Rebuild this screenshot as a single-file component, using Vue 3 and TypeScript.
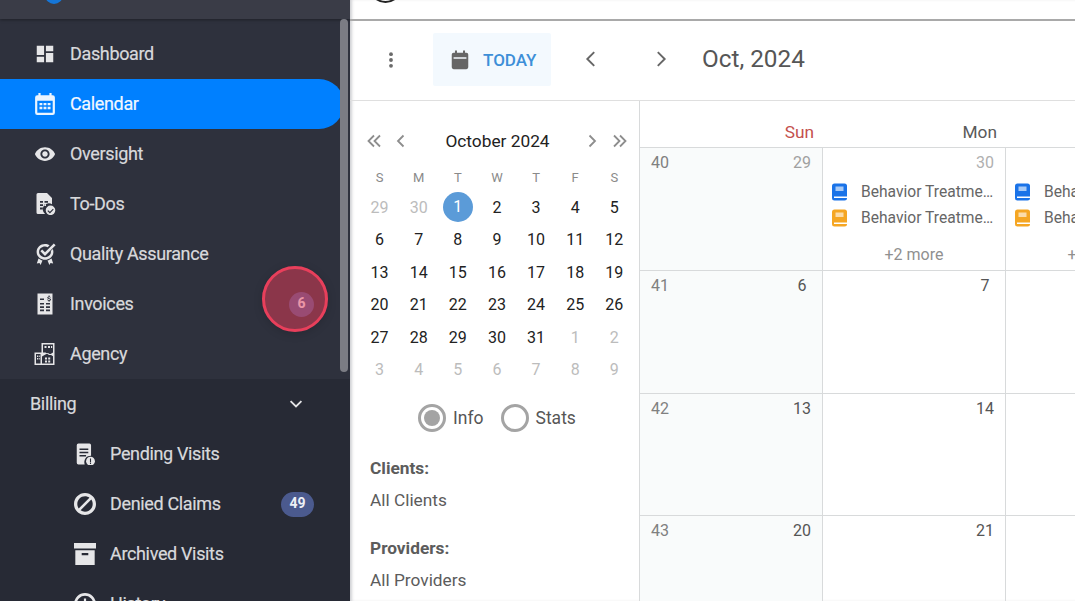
<script setup lang="ts">
const prevDays = [29, 30]
const monthDays = Array.from({ length: 31 }, (_, i) => i + 1)
const nextDays = [1, 2, 3, 4, 5, 6, 7, 8, 9]
interface Cell { label: number; muted: boolean; selected: boolean }
const cells: Cell[] = [
  ...prevDays.map((d) => ({ label: d, muted: true, selected: false })),
  ...monthDays.map((d) => ({ label: d, muted: false, selected: d === 1 })),
  ...nextDays.map((d) => ({ label: d, muted: true, selected: false })),
]
const weekdays = ['S', 'M', 'T', 'W', 'T', 'F', 'S']
const weeks = [
  { no: 41, sun: 6, mon: 7 },
  { no: 42, sun: 13, mon: 14 },
  { no: 43, sun: 20, mon: 21 },
]
</script>

<template>
  <div class="page">
    <aside class="sidebar">
      <div class="brand"><span class="brand-logo"></span></div>
      <nav class="nav">
        <a class="item">
          <svg class="ico" viewBox="0 0 24 24"><path d="M3 13h8V3H3v10zm0 8h8v-6H3v6zm10 0h8V11h-8v10zm0-18v6h8V3h-8z" /></svg>
          <span class="label">Dashboard</span>
        </a>
        <a class="item active">
          <svg class="ico" viewBox="2 1 20 20"><path d="M19 3h-1V1h-2v2H8V1H6v2H5a2 2 0 0 0-2 2v14a2 2 0 0 0 2 2h14a2 2 0 0 0 2-2V5a2 2 0 0 0-2-2zm0 16H5V8h14v11z" /><path d="M7 10h2.600v2.200H7zM10.700 10h2.600v2.200h-2.600zM14.400 10H17v2.200h-2.600zM7 13.500h2.600v2.200H7zM10.700 13.500h2.600v2.200h-2.600zM14.400 13.500H17v2.200h-2.600z" /></svg>
          <span class="label">Calendar</span>
        </a>
        <a class="item">
          <svg class="ico" viewBox="0 0 24 24"><path d="M12 4.500C7 4.500 2.730 7.610 1 12c1.730 4.390 6 7.500 11 7.500s9.270-3.110 11-7.500c-1.730-4.390-6-7.500-11-7.500zM12 17c-2.760 0-5-2.240-5-5s2.240-5 5-5 5 2.240 5 5-2.240 5-5 5zm0-8c-1.660 0-3 1.340-3 3s1.340 3 3 3 3-1.340 3-3-1.340-3-3-3z" /></svg>
          <span class="label">Oversight</span>
        </a>
        <a class="item">
          <svg class="ico" viewBox="1 1 22 22"><path fill-rule="evenodd" d="M5 1h9l5 5v6.200a6 6 0 0 0-6.900 9.800H5a1.500 1.500 0 0 1-1.500-1.500v-18A1.500 1.500 0 0 1 5 1zm2 8v1.800h3V9zm4.500 0v1.800H15V9zM7 12.300v1.800h3v-1.800zm4.500 0v1.800H13v-1.800zM7 15.600v1.800h3v-1.800z" /><path fill-rule="evenodd" d="M17.500 13.500a4.800 4.800 0 1 1 0 9.600 4.800 4.800 0 0 1 0-9.600zm2.400 3.300-3 3-1.700-1.600-.8.800 2.500 2.400 3.800-3.800z" /></svg>
          <span class="label">To-Dos</span>
        </a>
        <a class="item">
          <svg class="ico" viewBox="1 1 22 22"><path d="M12 2c-4.600 0-8.400 3.500-8.400 7.900s3.800 7.900 8.400 7.900 8.400-3.500 8.400-7.900c0-1-.2-2-.6-2.900l-2 2c.1.300.1.600.1.900 0 2.900-2.600 5.300-5.900 5.300S6.100 12.800 6.100 9.900 8.700 4.600 12 4.600c1 0 1.900.2 2.700.6l1.900-1.900C15.300 2.500 13.700 2 12 2z" /><path d="M20.800 1.500 12 10.300 9.200 7.500 7.400 9.300l4.600 4.600L22.600 3.300z" /><path d="m5.500 16.500 3 1.800 1 .1L7.600 23l-1.100-2.100-2.700.7zM18.500 16.500l-3 1.800-1 .1 1.900 4.600 1.100-2.100 2.700.7z" /></svg>
          <span class="label">Quality Assurance</span>
        </a>
        <a class="item">
          <svg class="ico" viewBox="1 1 22 22"><path fill-rule="evenodd" d="M4.500 1.500h15v21h-15zM7 6.500v1.500h4V6.500zM7 11v1.600h4V11zm6 0v1.600h4V11zM7 14.300v1.600h4v-1.600zm6 0v1.600h4v-1.600zM7 17.600v1.600h4v-1.600zm6 0v1.600h4v-1.600z" /><path class="cut" d="M15.600 3.500h1v.9c.7.100 1.200.5 1.300 1.200h-1c-.1-.3-.3-.5-.8-.5s-.8.200-.8.500.3.400 1 .6c.9.200 1.700.5 1.700 1.400 0 .7-.6 1.200-1.400 1.300v.8h-1v-.8c-.8-.1-1.400-.6-1.500-1.300h1c.1.400.4.600.9.600.6 0 .9-.2.900-.5s-.2-.5-1-.7c-.9-.2-1.600-.5-1.600-1.300 0-.7.500-1.100 1.300-1.300z" /></svg>
          <span class="label">Invoices</span>
          <span class="count count-small">6</span>
        </a>
        <a class="item">
          <svg class="ico" viewBox="1 1 22 22"><path fill-rule="evenodd" d="M8.500 1h13v22h-20V10.500h7zM10 2.500v8h2.500l3.500 2.500 4-2.500V2.500zM11.500 4h2v2h-2zm3.500 0h2v2h-2zm3 0h1.200v2H18zM3 12v9.500h4.500V12zm1 1.500h1V15H4zm1.700 0h1V15h-1zM4 16h1v1.500H4zm1.700 0h1v1.500h-1zM9 21.500h11v-7.200l-5-3.400-6 3.700zm3-6h2v2h-2zm3.200 0h2v2h-2zM12 18.500h2v2h-2zm3.200 0h2v2h-2z" /></svg>
          <span class="label">Agency</span>
        </a>
      </nav>
      <section class="billing">
        <div class="group">
          <span class="label">Billing</span>
          <svg class="chev" viewBox="0 0 24 24"><path d="M5.500 8.500 12 15l6.500-6.500" /></svg>
        </div>
        <a class="item sub">
          <svg class="ico" viewBox="3 2 20 20"><path d="M7 2.500h10A1.500 1.500 0 0 1 18.500 4v9.500a6 6 0 0 0-5.800 8H7A1.500 1.500 0 0 1 5.500 20V4A1.500 1.500 0 0 1 7 2.500z" /><path class="cut" d="M8 7h8v1.300H8zM8 10h8v1.300H8zM8 13h6v1.300H8z" /><path d="M18 14.500a4 4 0 1 1 0 8 4 4 0 0 1 0-8z" /><path class="cut" d="M17.500 16h1v3.400h-1zM17.500 20h1v1h-1z" /></svg>
          <span class="label">Pending Visits</span>
        </a>
        <a class="item sub">
          <svg class="ico" viewBox="2 2 20 20"><path d="M12 2C6.480 2 2 6.480 2 12s4.480 10 10 10 10-4.480 10-10S17.520 2 12 2zM5 12c0-3.870 3.130-7 7-7 1.500 0 2.900.48 4 1.290L6.290 16C5.480 14.900 5 13.500 5 12zm7 7c-1.500 0-2.900-.48-4-1.290L17.710 8C18.520 9.100 19 10.500 19 12c0 3.870-3.130 7-7 7z" /></svg>
          <span class="label">Denied Claims</span>
          <span class="count">49</span>
        </a>
        <a class="item sub">
          <svg class="ico" viewBox="2 2 20 20"><path fill-rule="evenodd" d="M2 2h20v5H2zM3.200 8.500h17.600V22H3.200zM9 11v2.200h6V11z" /></svg>
          <span class="label">Archived Visits</span>
        </a>
        <a class="item sub">
          <svg class="ico" viewBox="2 2 20 20"><path d="M12 2a10 10 0 1 0 0 20 10 10 0 0 0 0-20zm0 2.500a7.500 7.500 0 1 1 0 15 7.500 7.500 0 0 1 0-15zM11 7v6l5 3 1-1.600-4-2.400V7z" /></svg>
          <span class="label">History</span>
        </a>
      </section>
      <div class="scrollbar"></div>
      <div class="pulse"></div>
    </aside>

    <main class="main">
      <div class="topbar"><span class="top-logo"></span></div>
      <header class="toolbar">
        <svg class="kebab" viewBox="0 0 24 24"><circle cx="12" cy="5" r="2.300" /><circle cx="12" cy="12" r="2.300" /><circle cx="12" cy="19" r="2.300" /></svg>
        <button class="today">
          <svg class="today-ico" viewBox="0 0 24 24"><path fill-rule="evenodd" d="M19 4h-1.500V1.500h-2.200V4H8.700V1.500H6.500V4H5a2 2 0 0 0-2 2v14a2 2 0 0 0 2 2h14a2 2 0 0 0 2-2V6a2 2 0 0 0-2-2zM5 10.500h14V9H5z" /></svg>
          <span>TODAY</span>
        </button>
        <svg class="nav-chev" viewBox="0 0 24 24"><path d="M15.500 4.500 8 12l7.500 7.500" /></svg>
        <svg class="nav-chev next" viewBox="0 0 24 24"><path d="M8.500 4.500 16 12l-7.500 7.500" /></svg>
        <h1 class="range">Oct, 2024</h1>
      </header>

      <div class="content">
        <section class="panel">
          <div class="month-head">
            <span class="arrow-group">
              <svg class="mini" viewBox="0 0 16 16"><path d="M8 2.500 2.500 8 8 13.500M14 2.500 8.500 8l5.500 5.500" /></svg>
              <svg class="mini second" viewBox="0 0 16 16"><path d="M10.500 2.500 5 8l5.500 5.500" /></svg>
            </span>
            <span class="month-title">October 2024</span>
            <span class="arrow-group">
              <svg class="mini third" viewBox="0 0 16 16"><path d="M5.500 2.500 11 8l-5.500 5.500" /></svg>
              <svg class="mini fourth" viewBox="0 0 16 16"><path d="m2 2.500 5.500 5.500L2 13.500M8 2.500l5.500 5.500L8 13.500" /></svg>
            </span>
          </div>
          <div class="weekdays">
            <span v-for="(w, i) in weekdays" :key="i">{{ w }}</span>
          </div>
          <div class="days">
            <span v-for="(c, i) in cells" :key="i" class="day" :class="{ muted: c.muted }">
              <span :class="{ selected: c.selected }">{{ c.label }}</span>
            </span>
          </div>
          <div class="radios">
            <span class="radio on"></span><span class="radio-label">Info</span>
            <span class="radio"></span><span class="radio-label">Stats</span>
          </div>
          <dl class="filters">
            <dt>Clients:</dt>
            <dd>All Clients</dd>
            <dt>Providers:</dt>
            <dd>All Providers</dd>
          </dl>
        </section>

        <section class="calendar">
          <div class="cal-head">
            <span class="sun">Sun</span>
            <span>Mon</span>
          </div>
          <div class="cal-row">
            <div class="cell sunday">
              <div class="cell-top"><span class="wk">40</span><span class="date soft">29</span></div>
            </div>
            <div class="cell">
              <div class="cell-top end"><span class="date softer">30</span></div>
              <div class="event">
                <svg class="book" viewBox="0 0 18 18"><rect x="1" y="0.500" width="15" height="17" rx="2.500" fill="#1a73e8" /><rect x="4.500" y="3.500" width="8" height="4.500" fill="#a9cbf6" /><rect x="3" y="13.500" width="14" height="1.500" fill="#fff" /></svg>
                <span class="ev-text">Behavior Treatment Plan</span>
              </div>
              <div class="event">
                <svg class="book" viewBox="0 0 18 18"><rect x="1" y="0.500" width="15" height="17" rx="2.500" fill="#f5a623" /><rect x="4.500" y="3.500" width="8" height="4.500" fill="#fbdcaa" /><rect x="3" y="13.500" width="14" height="1.500" fill="#fff" /></svg>
                <span class="ev-text">Behavior Treatment Plan</span>
              </div>
              <div class="more">+2 more</div>
            </div>
            <div class="cell">
              <div class="event first-blank">
                <svg class="book" viewBox="0 0 18 18"><rect x="1" y="0.500" width="15" height="17" rx="2.500" fill="#1a73e8" /><rect x="4.500" y="3.500" width="8" height="4.500" fill="#a9cbf6" /><rect x="3" y="13.500" width="14" height="1.500" fill="#fff" /></svg>
                <span class="ev-text">Behavior Treatment Plan</span>
              </div>
              <div class="event">
                <svg class="book" viewBox="0 0 18 18"><rect x="1" y="0.500" width="15" height="17" rx="2.500" fill="#f5a623" /><rect x="4.500" y="3.500" width="8" height="4.500" fill="#fbdcaa" /><rect x="3" y="13.500" width="14" height="1.500" fill="#fff" /></svg>
                <span class="ev-text">Behavior Treatment Plan</span>
              </div>
              <div class="more">+2 more</div>
            </div>
          </div>
          <div v-for="w in weeks" :key="w.no" class="cal-row">
            <div class="cell sunday">
              <div class="cell-top"><span class="wk">{{ w.no }}</span><span class="date">{{ w.sun }}</span></div>
            </div>
            <div class="cell"><div class="cell-top end"><span class="date">{{ w.mon }}</span></div></div>
            <div class="cell"></div>
          </div>
        </section>
      </div>
    </main>
  </div>
</template>

<style>
html, body { margin: 0; overflow: hidden; background: #fff; }
</style>

<style scoped>
.page {
  display: flex;
  width: 1075px;
  height: 601px;
  overflow: hidden;
  font-family: Roboto, "Liberation Sans", sans-serif;
}
.sidebar {
  position: relative;
  flex: 0 0 350px;
  height: 601px;
  overflow: hidden;
  background: #2e313d;
  color: #d8d9dc;
  font-size: 18px;
}
.brand {
  position: relative;
  height: 19px;
  overflow: hidden;
  background: #3a3c47;
  box-shadow: 0 1px 3px rgba(0, 0, 0, 0.35);
}
.brand-logo {
  position: absolute;
  left: 45px;
  top: -14px;
  width: 18px;
  height: 18px;
  border-radius: 50%;
  background: #1576d8;
}
.nav { padding-top: 10px; }
.item {
  display: flex;
  align-items: center;
  gap: 14px;
  height: 50px;
  width: 344px;
  box-sizing: border-box;
  padding: 0 36px 0 34px;
  letter-spacing: -0.35px;
}
.label {
  margin-bottom: 2px;
  -webkit-text-stroke: 0.2px currentColor;
}
.item.active {
  background: #0080ff;
  color: #f2f8ff;
  border-radius: 0 25px 25px 0;
}
.ico {
  flex: 0 0 22px;
  width: 22px;
  height: 22px;
  fill: #e6e6e8;
}
.active .ico { fill: #eaf4ff; }
.cut { fill: #2e313d; }
.billing {
  background: #272a35;
  height: 300px;
}
.group {
  display: flex;
  align-items: center;
  justify-content: space-between;
  height: 50px;
  width: 344px;
  box-sizing: border-box;
  padding: 0 38px 0 30px;
  letter-spacing: -0.35px;
}
.chev {
  width: 20px;
  height: 20px;
  fill: none;
  stroke: #e4e4e6;
  stroke-width: 2.200;
}
.sub { padding-left: 74px; }
.sub .cut { fill: #272a35; }
.count {
  margin-left: auto;
  min-width: 33px;
  height: 25px;
  border-radius: 13px;
  background: #4b5a8e;
  color: #eef0f6;
  font-size: 14px;
  font-weight: 700;
  letter-spacing: 0;
  line-height: 23px;
  text-align: center;
  margin-right: -6px;
}
.count-small {
  min-width: 25px;
  margin-right: -6px;
}
.scrollbar {
  position: absolute;
  left: 340px;
  top: 19px;
  width: 8px;
  height: 353px;
  border-radius: 4px;
  background: #7b7c84;
}
.pulse {
  position: absolute;
  left: 262px;
  top: 266px;
  width: 66px;
  height: 66px;
  box-sizing: border-box;
  border: 3px solid #e83f5b;
  border-radius: 50%;
  background: rgba(232, 60, 88, 0.5);
  box-shadow: 0 2px 10px rgba(0, 0, 0, 0.15);
}
.main {
  flex: 1;
  min-width: 0;
  height: 601px;
  overflow: hidden;
  background: #fff;
  box-shadow: inset 3px 0 3px -1px rgba(40, 44, 60, 0.22);
}
.topbar {
  position: relative;
  height: 19px;
  overflow: hidden;
  border-bottom: 2px solid #a9a9a9;
}
.top-logo {
  position: absolute;
  left: 19px;
  top: -30px;
  width: 29px;
  height: 29px;
  border: 2px solid #222;
  border-radius: 50%;
  box-sizing: content-box;
}
.toolbar {
  display: flex;
  align-items: center;
  height: 79px;
  border-bottom: 1px solid #dfdfdf;
  padding-left: 31px;
  color: #555;
}
.kebab {
  width: 20px;
  height: 20px;
  fill: #6b6b6b;
  margin-top: -2px;
}
.today {
  display: flex;
  align-items: center;
  gap: 12px;
  width: 118px;
  height: 53px;
  margin: -2px 0 0 32px;
  padding: 0 0 0 16px;
  border: 0;
  border-radius: 2px;
  background: #f3f9fe;
  color: #3d8fd8;
  font: 500 17px Roboto, "Liberation Sans", sans-serif;
}
.today-ico {
  width: 22px;
  height: 22px;
  fill: #666;
}
.nav-chev {
  width: 22px;
  height: 22px;
  fill: none;
  stroke: #666;
  stroke-width: 2.100;
  margin-left: 29px;
  margin-top: -3px;
}
.nav-chev.next { margin-left: 48px; }
.range {
  margin: -5px 0 0 30px;
  font-size: 24.300px;
  font-weight: 400;
  color: #565656;
}
.content {
  display: flex;
  height: 500px;
}
.panel {
  flex: 0 0 290px;
  box-sizing: border-box;
  border-right: 1px solid #d8dadb;
  padding: 24px 0 0 10px;
}
.month-head {
  display: flex;
  align-items: center;
  justify-content: space-between;
  width: 262px;
  height: 32px;
  padding-left: 6px;
}
.arrow-group { display: flex; align-items: center; }
.mini {
  width: 16px;
  height: 16px;
  fill: none;
  stroke: #8d8d8d;
  stroke-width: 1.800;
}
.mini.second { margin-left: 11px; }
.mini.third { margin-right: 12px; }
.month-title {
  font-size: 17.300px;
  color: #222;
  margin-left: 2px;
}
.weekdays, .days {
  display: grid;
  grid-template-columns: repeat(7, 39.140px);
}
.weekdays {
  margin-top: 11px;
  height: 23px;
  line-height: 20px;
  text-align: center;
  font-size: 13px;
  color: #8a8a8a;
}
.days {
  grid-auto-rows: 32.500px;
  text-align: center;
  font-size: 16px;
  color: #222;
}
.day {
  display: flex;
  align-items: center;
  justify-content: center;
}
.day.muted { color: #bcbcbc; }
.selected {
  display: block;
  width: 30px;
  height: 30px;
  border-radius: 50%;
  background: #5b9bd8;
  color: #fff;
  line-height: 30px;
}
.radios {
  display: flex;
  align-items: center;
  height: 28px;
  margin-top: 18px;
  padding-left: 58px;
  font-size: 17.500px;
  color: #565656;
}
.radio {
  position: relative;
  box-sizing: border-box;
  width: 28px;
  height: 28px;
  border: 3px solid #a4a4a4;
  border-radius: 50%;
}
.radio.on::after {
  content: "";
  position: absolute;
  inset: 3px;
  border-radius: 50%;
  background: #a4a4a4;
}
.radio-label { margin: 0 17px 0 7px; }
.filters {
  margin: 0;
  padding: 24px 0 0 10px;
  font-size: 17.300px;
  color: #5c5c5c;
}
.filters dt {
  font-weight: 700;
  font-size: 17.300px;
  line-height: 24px;
}
.filters dd {
  margin: 8px 0 24px;
  line-height: 24px;
}
.calendar {
  flex: 1;
  min-width: 0;
  overflow: hidden;
}
.cal-head {
  display: grid;
  grid-template-columns: 183px 183px;
  height: 47px;
  box-sizing: border-box;
  border-bottom: 1px solid #d8dadb;
  padding-top: 20px;
  font-size: 17.300px;
  line-height: 22px;
  color: #5a5a5a;
  text-align: right;
  width: 435px;
}
.cal-head span { padding-right: 9px; }
.cal-head .sun { color: #c4504d; }
.cal-row {
  display: grid;
  grid-template-columns: 183px 183px 183px;
  height: 122.800px;
}
.cell {
  box-sizing: border-box;
  min-width: 0;
  border-right: 1px solid #d8dadb;
  border-bottom: 1px solid #d8dadb;
  padding: 4px 11px 0;
  font-size: 16px;
  color: #555;
}
.sunday { background: #f9fbfb; }
.cell-top {
  display: flex;
  justify-content: space-between;
  line-height: 22px;
}
.cell-top.end { justify-content: flex-end; }
.date {
  min-width: 18px;
  text-align: center;
}
.wk { color: #808080; }
.soft { color: #a0a0a0; }
.softer { color: #b0b0b0; }
.event {
  display: flex;
  align-items: center;
  gap: 12px;
  height: 26px;
  margin-left: -3px;
  margin-right: -2px;
}
.cell-top + .event { margin-top: 5px; }
.first-blank { margin-top: 27px; }
.book {
  flex: 0 0 18px;
  width: 18px;
  height: 18px;
}
.ev-text {
  flex: 1;
  min-width: 0;
  overflow: hidden;
  white-space: nowrap;
  text-overflow: ellipsis;
  font-size: 15.600px;
  color: #666;
}
.more {
  margin-top: 13px;
  line-height: 22px;
  text-align: center;
  color: #909090;
}
</style>
